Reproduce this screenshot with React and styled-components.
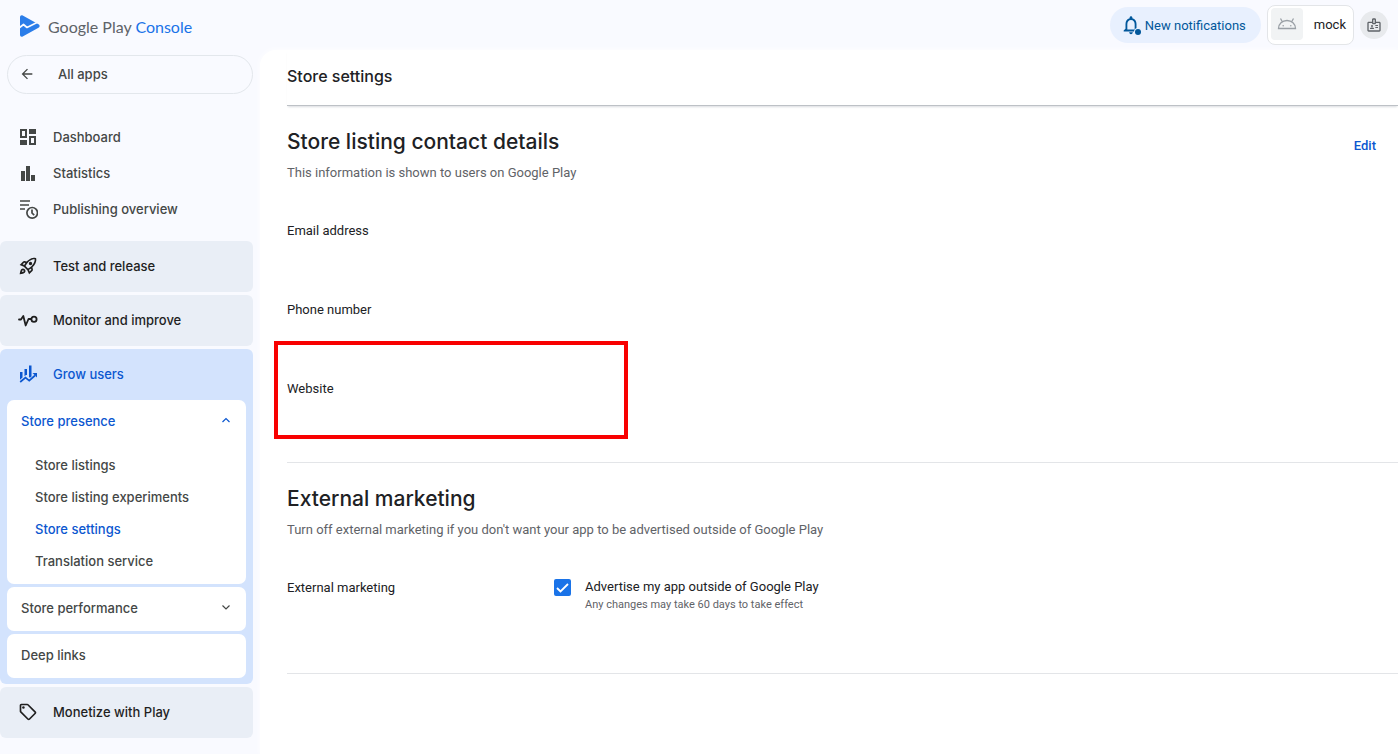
import React, { useState } from "react";
import styled, { createGlobalStyle } from "styled-components";
import {
  MdArrowBack,
  MdNotificationsNone,
  MdOutlineBadge,
  MdOutlineRocketLaunch,
  MdOutlineSell,
} from "react-icons/md";

const brand = `"Inter", "Roboto", sans-serif`;
const body = `"Roboto", "Liberation Sans", sans-serif`;

const GlobalStyle = createGlobalStyle`
  * {
    box-sizing: border-box;
  }
  body {
    margin: 0;
    background: #f9faff;
    color: #202124;
    font-family: ${body};
    font-size: 13px;
  }
  h1, h2, p, ul {
    margin: 0;
    padding: 0;
  }
  button {
    font: inherit;
    border: 0;
    cursor: pointer;
  }
`;

// Icons
function LogoIcon() {
  return (
    <svg width="22" height="24" viewBox="0 0 22 24" aria-hidden="true">
      <path d="M2 3.200C2 1.600 3.300.8 4.700 1.500L20.500 10.200c1.500.8 1.500 2.800 0 3.600L4.700 22.500C3.300 23.200 2 22.400 2 20.800z" fill="#2b7de9" />
      <path d="M1 14l4.500-3.500 3.500 3L20 8" fill="none" stroke="#f9faff" strokeWidth="1.700" strokeLinejoin="round" />
    </svg>
  );
}

function DashboardIcon() {
  return (
    <svg width="20" height="20" viewBox="0 0 20 20" fill="currentColor" aria-hidden="true">
      <path d="M2 2h7v9H2zM4 4v5h3V4z" fillRule="evenodd" />
      <path d="M11 2h7v5h-7zM2 13h7v5H2z" />
      <path d="M11 9h7v9h-7zM13 11v5h3v-5z" fillRule="evenodd" />
    </svg>
  );
}

function StatisticsIcon() {
  return (
    <svg width="20" height="20" viewBox="0 0 20 20" fill="currentColor" aria-hidden="true">
      <path d="M3 8h4v10H3zM8 3h4v15H8zM13 12h4v6h-4z" />
    </svg>
  );
}

function PublishingIcon() {
  return (
    <svg width="20" height="20" viewBox="0 0 20 20" fill="none" stroke="currentColor" strokeWidth="1.700" aria-hidden="true">
      <path d="M2 2h10M2 6h9M2 10h5" />
      <circle cx="14.200" cy="13.800" r="5.300" />
      <path d="M14 10.500V14l2.200 2.200" />
    </svg>
  );
}

function MonitorIcon() {
  return (
    <svg width="20" height="20" viewBox="0 0 20 20" fill="none" stroke="currentColor" strokeWidth="1.800" strokeLinejoin="round" strokeLinecap="round" aria-hidden="true">
      <path d="M1 9.500h2L5.300 6l2.400 9.500L10.500 9h2.700" />
      <circle cx="16" cy="9.200" r="2.600" />
    </svg>
  );
}

function GrowIcon() {
  return (
    <svg width="20" height="20" viewBox="0 0 20 20" fill="currentColor" aria-hidden="true">
      <path d="M2 8h2.500v5.500L2 15.800zM6.500 5H9v6H8l-1.500 1.300zM11 1.500h2.500v11L12 13.800l-1-.9z" />
      <path d="M2.200 18l5.300-4.300 3.700 3L17 11.500" fill="none" stroke="currentColor" strokeWidth="1.700" />
      <path d="M14.500 9H19v4.500z" />
    </svg>
  );
}

function AndroidIcon() {
  return (
    <svg width="20" height="14" viewBox="0 0 20 14" fill="none" stroke="#9aa0a6" strokeWidth="1.300" aria-hidden="true">
      <path d="M1.500 11.500a8.500 8 0 0 1 17 0zM5.500 5L3.500 1.500M14.500 5l2-3.500" />
      <circle cx="6.200" cy="8.700" r=".8" fill="#9aa0a6" stroke="none" />
      <circle cx="13.800" cy="8.700" r=".8" fill="#9aa0a6" stroke="none" />
    </svg>
  );
}

function ChevronIcon({ up }) {
  return (
    <svg width="10" height="10" viewBox="0 0 10 10" fill="none" stroke="currentColor" strokeWidth="1.200" aria-hidden="true">
      <path d={up ? "M1.500 6L5 2.500 8.500 6" : "M1.500 2.500L5 6l3.500-3.500"} />
    </svg>
  );
}

const links = [
  { label: "Dashboard", icon: <DashboardIcon /> },
  { label: "Statistics", icon: <StatisticsIcon /> },
  { label: "Publishing overview", icon: <PublishingIcon /> },
];

const presence = ["Store listings", "Store listing experiments", "Store settings", "Translation service"];

export default function App() {
  const [advertise, setAdvertise] = useState(true);

  return (
    <>
      <GlobalStyle />
      <Page>
        <Sidebar>
          <Logo href="#">
            <LogoIcon />
            <span>
              Google Play <em>Console</em>
            </span>
          </Logo>
          <AllApps type="button">
            <MdArrowBack size={16} />
            All apps
          </AllApps>
          <nav>
            <LinkList>
              {links.map(({ label, icon }) => (
                <li key={label}>
                  <NavLink href="#">
                    {icon}
                    {label}
                  </NavLink>
                </li>
              ))}
            </LinkList>
            <Groups>
              <Group>
                <GroupButton type="button">
                  <MdOutlineRocketLaunch size={20} />
                  Test and release
                </GroupButton>
              </Group>
              <Group>
                <GroupButton type="button">
                  <MonitorIcon />
                  Monitor and improve
                </GroupButton>
              </Group>
              <Group $active>
                <GroupButton type="button" $active>
                  <GrowIcon />
                  Grow users
                </GroupButton>
                <Cards>
                  <Card>
                    <CardButton type="button" $active aria-expanded="true">
                      Store presence
                      <ChevronIcon up />
                    </CardButton>
                    <SubList>
                      {presence.map((label) => (
                        <li key={label}>
                          <SubLink href="#" $active={label === "Store settings"}>
                            {label}
                          </SubLink>
                        </li>
                      ))}
                    </SubList>
                  </Card>
                  <Card>
                    <CardButton type="button" aria-expanded="false">
                      Store performance
                      <ChevronIcon />
                    </CardButton>
                  </Card>
                  <Card>
                    <CardButton type="button">Deep links</CardButton>
                  </Card>
                </Cards>
              </Group>
              <Group>
                <GroupButton type="button">
                  <MdOutlineSell size={20} />
                  Monetize with Play
                </GroupButton>
              </Group>
            </Groups>
          </nav>
        </Sidebar>
        <Column>
          <TopBar>
            <Notifications type="button">
              <Bell>
                <MdNotificationsNone size={22} />
                <Dot />
              </Bell>
              New notifications
            </Notifications>
            <AppButton type="button">
              <AppThumb>
                <AndroidIcon />
              </AppThumb>
              mock
            </AppButton>
            <Account type="button" aria-label="Account">
              <MdOutlineBadge size={16} />
            </Account>
          </TopBar>
          <Main>
            <TitleBar>
              <Title>Store settings</Title>
            </TitleBar>
            <Section>
              <SectionHead>
                <SectionTitle>Store listing contact details</SectionTitle>
                <EditLink href="#">Edit</EditLink>
              </SectionHead>
              <Hint>This information is shown to users on Google Play</Hint>
              <Fields>
                <Field>Email address</Field>
                <Field>Phone number</Field>
                <Field>
                  Website
                  <Highlight />
                </Field>
              </Fields>
            </Section>
            <Section>
              <SectionHead>
                <SectionTitle>External marketing</SectionTitle>
              </SectionHead>
              <Hint>
                Turn off external marketing if you don't want your app to be advertised outside of Google Play
              </Hint>
              <Option>
                <OptionName>External marketing</OptionName>
                <Checkbox
                  id="advertise"
                  type="checkbox"
                  checked={advertise}
                  onChange={(e) => setAdvertise(e.target.checked)}
                />
                <OptionLabel htmlFor="advertise">
                  Advertise my app outside of Google Play
                  <small>Any changes may take 60 days to take effect</small>
                </OptionLabel>
              </Option>
            </Section>
          </Main>
        </Column>
      </Page>
    </>
  );
}

const Page = styled.div`
  display: flex;
  min-height: 100vh;
`;
const Sidebar = styled.aside`
  flex: 0 0 253px;
  font-family: ${brand};
  font-weight: 500;
`;
const Logo = styled.a`
  display: flex;
  align-items: center;
  gap: 8px;
  height: 52px;
  padding-left: 18px;
  color: #5f6368;
  font-family: "Lato", ${brand};
  font-size: 16px;
  font-weight: 400;
  text-decoration: none;
  em {
    color: #1a73e8;
    font-style: normal;
  }
`;
const AllApps = styled.button`
  display: flex;
  align-items: center;
  gap: 23px;
  width: calc(100% - 7px);
  height: 39px;
  margin: 3px 0 0 7px;
  padding: 0 11px 2px;
  background: transparent;
  border: 1px solid #e3e7ec;
  border-radius: 20px;
  color: #444746;
`;
const LinkList = styled.ul`
  padding-top: 25px;
  list-style: none;
`;
const NavLink = styled.a`
  display: flex;
  align-items: center;
  gap: 15px;
  height: 36px;
  padding-left: 18px;
  color: #444746;
  text-decoration: none;
`;
const Groups = styled.div`
  display: flex;
  flex-direction: column;
  gap: 3px;
  padding-top: 14px;
`;
const Group = styled.div`
  border-radius: 6px;
  background: ${({ $active }) => ($active ? "#d3e3fd" : "#e9eef6")};
`;
const GroupButton = styled.button`
  display: flex;
  align-items: center;
  gap: 15px;
  width: 100%;
  height: 51px;
  padding: 0 18px 1px;
  background: transparent;
  color: ${({ $active }) => ($active ? "#0b57d0" : "#1f1f1f")};
`;
const Cards = styled.div`
  display: flex;
  flex-direction: column;
  gap: 3px;
  padding: 0 7px 6px;
`;
const Card = styled.div`
  background: #fff;
  border-radius: 7px;
`;
const CardButton = styled.button`
  display: flex;
  align-items: center;
  justify-content: space-between;
  width: 100%;
  height: 44px;
  padding: 0 15px 2px 14px;
  background: transparent;
  color: ${({ $active }) => ($active ? "#0b57d0" : "#444746")};
`;
const SubList = styled.ul`
  padding: 5px 0 7px 28px;
  list-style: none;
`;
const SubLink = styled.a`
  display: flex;
  align-items: center;
  height: 32px;
  color: ${({ $active }) => ($active ? "#0b57d0" : "#444746")};
  text-decoration: none;
`;
const Column = styled.div`
  display: flex;
  flex: 1;
  flex-direction: column;
  min-width: 0;
`;
const TopBar = styled.header`
  display: flex;
  align-items: center;
  justify-content: flex-end;
  gap: 6px;
  height: 50px;
  padding-right: 10px;
`;
const Notifications = styled.button`
  display: flex;
  align-items: center;
  gap: 3px;
  height: 36px;
  padding: 0 15px 0 10px;
  background: #e8f0fe;
  border-radius: 18px;
  color: #01579b;
`;
const Bell = styled.span`
  position: relative;
  display: flex;
`;
const Dot = styled.span`
  position: absolute;
  right: 1px;
  bottom: 1px;
  width: 6px;
  height: 6px;
  border-radius: 50%;
  background: #01579b;
  box-shadow: 0 0 0 1px #e8f0fe;
`;
const AppButton = styled.button`
  display: flex;
  align-items: center;
  gap: 11px;
  height: 40px;
  padding: 0 7px 2px 3px;
  background: #fff;
  border: 1px solid #e3e5e8;
  border-radius: 8px;
  color: #202124;
`;
const AppThumb = styled.span`
  display: grid;
  place-items: center;
  width: 32px;
  height: 32px;
  border-radius: 4px;
  background: #f1f3f4;
`;
const Account = styled.button`
  display: grid;
  place-items: center;
  width: 28px;
  height: 28px;
  padding: 0;
  border-radius: 50%;
  background: #e8eaed;
  color: #5f6368;
`;
const Main = styled.main`
  flex: 1;
  margin-left: 7px;
  padding-left: 27px;
  background: #fff;
  border-top-left-radius: 16px;
  box-shadow: 0 0 6px #fff;
`;
const TitleBar = styled.div`
  display: flex;
  align-items: center;
  height: 56px;
  padding-bottom: 3px;
  border-bottom: 1px solid #bdc1c6;
  box-shadow: 0 2px 2px -1px #dadce0;
`;
const Title = styled.h1`
  font-family: ${brand};
  font-size: 16px;
  font-weight: 500;
`;
const Section = styled.section`
  padding: 22px 0 34px;
  border-bottom: 1px solid #e3e5e8;
`;
const SectionHead = styled.div`
  display: flex;
  align-items: flex-end;
  justify-content: space-between;
  padding-right: 22px;
`;
const SectionTitle = styled.h2`
  font-family: ${brand};
  font-size: 21px;
  font-weight: 500;
  line-height: 28px;
`;
const EditLink = styled.a`
  color: #0b57d0;
  font-weight: 500;
  line-height: 20px;
  text-decoration: none;
`;
const Hint = styled.p`
  padding-top: 7px;
  color: #5f6368;
  line-height: 20px;
`;
const Fields = styled.div`
  padding-top: 8px;
`;
const Field = styled.div`
  position: relative;
  display: flex;
  align-items: center;
  width: 328px;
  height: 79px;
`;
const Highlight = styled.span`
  position: absolute;
  inset: -8px -13px -11px;
  border: 4px solid #f80000;
  pointer-events: none;
`;
const Option = styled.div`
  display: flex;
  align-items: flex-start;
  padding: 38px 0 25px;
  line-height: 18px;
`;
const OptionName = styled.span`
  width: 267px;
  padding-top: 1px;
`;
const Checkbox = styled.input`
  appearance: none;
  width: 17px;
  height: 17px;
  margin: 1px 14px 0 0;
  border: 2px solid #5f6368;
  border-radius: 2px;
  &:checked {
    border-color: #1a73e8;
    background: #1a73e8
      url("data:image/svg+xml,%3Csvg xmlns='http://www.w3.org/2000/svg' viewBox='0 0 13 13'%3E%3Cpath d='M1 7l3.500 3.500L12 3' fill='none' stroke='white' stroke-width='1.800'/%3E%3C/svg%3E")
      center / 13px no-repeat;
  }
`;
const OptionLabel = styled.label`
  display: flex;
  flex-direction: column;
  small {
    color: #5f6368;
    font-size: 11px;
  }
`;
